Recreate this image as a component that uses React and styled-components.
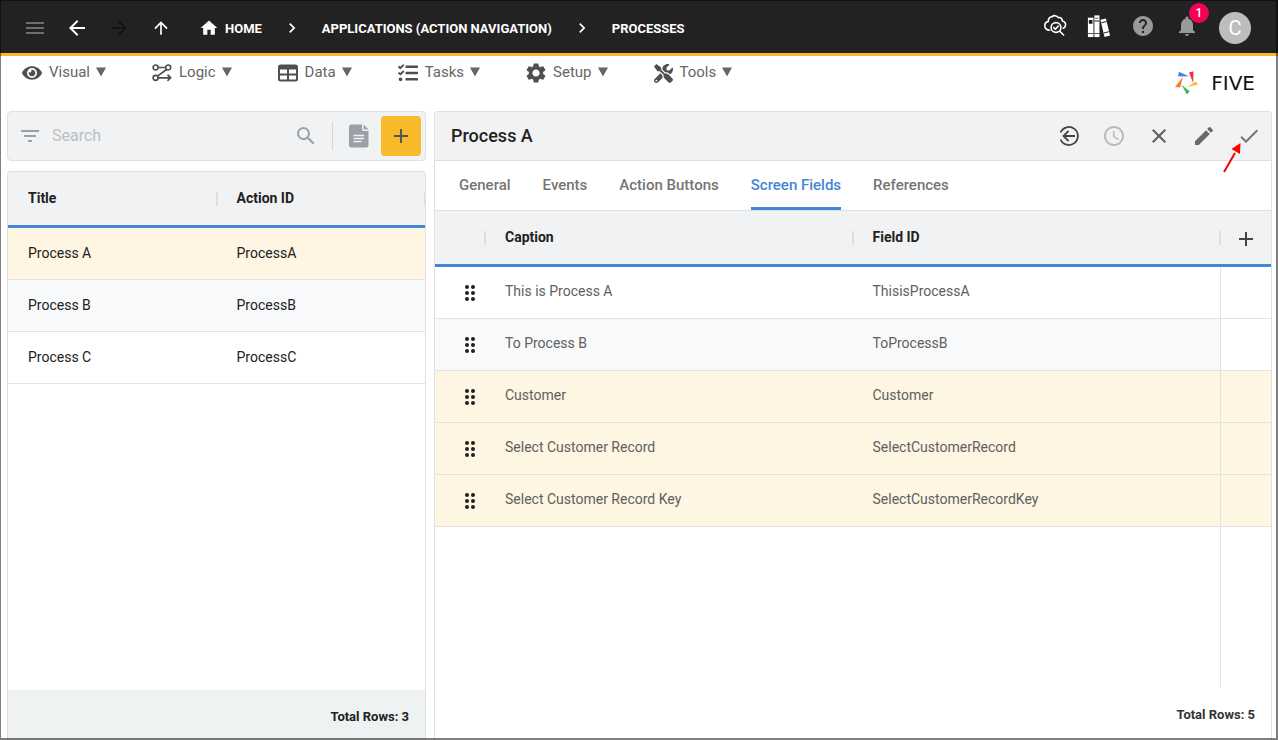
import React, { useState } from 'react';
import styled, { createGlobalStyle, css } from 'styled-components';
import {
  MdMenu, MdArrowBack, MdArrowForward, MdArrowUpward, MdHome, MdChevronRight, MdHelp, MdNotifications,
  MdSettings, MdFilterList, MdSearch, MdAdd, MdSchedule, MdClose, MdEdit, MdCheck,
} from 'react-icons/md';
import { FaEye, FaTasks, FaTools } from 'react-icons/fa';

const GlobalStyle = createGlobalStyle`
  * {
    box-sizing: border-box;
  }

  body {
    margin: 0;
    background: #fff;
    color: #212121;
    font-family: Roboto, "Liberation Sans", sans-serif;
    font-size: 14px;
  }

  button,
  input {
    font: inherit;
  }
`;

const Page = styled.div`
  position: relative;
  display: flex;
  flex-direction: column;
  min-height: 100vh;

  &::after {
    content: "";
    position: absolute;
    inset: 0;
    border: solid rgba(0, 0, 0, 0.5);
    border-width: 1px 2px 2px 1px;
    pointer-events: none;
  }
`;

const IconButton = styled.button`
  position: relative;
  display: flex;
  align-items: center;
  justify-content: center;
  width: 24px;
  height: 24px;
  padding: 0;
  border: 0;
  background: none;
  color: ${(props) => props.$color || '#5f5f5f'};
  cursor: pointer;
`;

/* Top bar */

const TopBar = styled.header`
  display: flex;
  align-items: center;
  height: 56px;
  padding: 3px 27px 0 23px;
  border-bottom: 3px solid #fbb829;
  background: #222;
`;

const NavButtons = styled.div`
  display: flex;
  gap: 18px;
  margin-right: 26px;
`;

const Breadcrumbs = styled.nav`
  display: flex;
  align-items: center;
  gap: 20px;
  color: #fff;
`;

const Crumb = styled.a`
  display: flex;
  align-items: center;
  gap: 6px;
  color: #fff;
  font-size: 13px;
  font-weight: 700;
  line-height: 21px;
  text-decoration: none;
`;

const TopActions = styled.div`
  display: flex;
  align-items: center;
  gap: 20px;
  margin-left: auto;
`;

const TopIcons = styled.div`
  display: flex;
  gap: 20px;
  padding-bottom: 4px;
`;

const Badge = styled.span`
  position: absolute;
  top: -11px;
  right: -10px;
  width: 20px;
  height: 20px;
  border-radius: 10px;
  background: #f50057;
  color: #fff;
  font-size: 12px;
  font-weight: 500;
  line-height: 20px;
  text-align: center;
`;

const Avatar = styled.button`
  width: 32px;
  height: 32px;
  padding: 0;
  border: 0;
  border-radius: 50%;
  background: #bdbdbd;
  color: #fff;
  font-size: 20px;
  line-height: 32px;
`;

/* Menu bar */

const MenuBar = styled.div`
  display: flex;
  justify-content: space-between;
  height: 55px;
  padding: 4px 23px 0 22px;
`;

const Menus = styled.nav`
  display: flex;
  align-items: flex-start;
  gap: 46px;
`;

const MenuButton = styled.button`
  display: flex;
  align-items: center;
  height: 24px;
  padding: 0;
  border: 0;
  background: none;
  color: #666;
  font-size: 15px;
  line-height: 24px;
  cursor: pointer;

  svg:first-child {
    margin: 2px 7px 0 0;
    color: #4f4f4f;
  }
`;

const Caret = styled.svg`
  margin-left: 6px;
`;

const Logo = styled.div`
  display: flex;
  align-items: center;
  align-self: flex-start;
  gap: 12px;
  margin-top: 11px;
  color: #111;
  font-family: "DejaVu Sans", sans-serif;
  font-size: 20px;
  line-height: 24px;
`;

/* Panels */

const Workspace = styled.main`
  flex: 1;
  display: grid;
  grid-template-columns: 1fr 2fr;
  gap: 8px;
  padding: 0 6px 0 7px;
`;

const ListColumn = styled.section`
  display: flex;
  flex-direction: column;
  gap: 10px;
  min-width: 0;
`;

const SearchBar = styled.div`
  display: flex;
  align-items: center;
  height: 50px;
  padding: 0 4px 0 10px;
  border: 1px solid #e0e0e0;
  border-radius: 4px;
  background: #f1f2f4;
`;

const SearchInput = styled.input`
  flex: 1;
  min-width: 0;
  padding: 0 10px;
  border: 0;
  outline: 0;
  background: none;
  color: #212121;
  font-size: 16px;
  line-height: 24px;

  &::placeholder {
    color: #bcbfc3;
    opacity: 1;
  }
`;

const Divider = styled.span`
  width: 1px;
  height: 28px;
  margin: 0 14px;
  background: #d5d7d9;
`;

const AddButton = styled(IconButton)`
  width: 40px;
  height: 40px;
  margin-left: 10px;
  border-radius: 4px;
  background: #f8b92b;
`;

const Card = styled.div`
  flex: 1;
  display: flex;
  flex-direction: column;
  min-width: 0;
  border: 1px solid #e0e0e0;
  border-bottom: 0;
  border-radius: 4px 4px 0 0;
  overflow: hidden;
`;

const Table = styled.table`
  width: 100%;
  table-layout: fixed;
  border-collapse: separate;
  border-spacing: 0;
`;

const HeadCell = styled.th`
  position: relative;
  height: 56px;
  padding: 0 20px 2px;
  border-bottom: 3px solid #4485d8;
  background: #f1f2f4;
  font-size: 14px;
  font-weight: 700;
  text-align: left;

  &::after {
    content: "";
    position: absolute;
    top: 20px;
    right: -1px;
    z-index: 1;
    width: 2px;
    height: 14px;
    background: ${(props) => (props.$last ? 'none' : '#dcdee0')};
  }
`;

const AddCell = styled(HeadCell)`
  padding: 2px 14px 0;
`;

const Row = styled.tr`
  --row: #fff;

  &:nth-child(even) {
    --row: #f8f9fb;
  }

  ${(props) => props.$marked && css`
    &&& {
      --row: #fef5e3;
      --side: #fef5e3;
    }
  `}
`;

const Cell = styled.td`
  height: 52px;
  padding: 0 20px 2px;
  border-bottom: 1px solid #e2e2e2;
  background: var(--row);
  font-size: 14px;
  overflow: hidden;
  text-overflow: ellipsis;
  white-space: nowrap;
`;

const FieldCell = styled(Cell)`
  padding-bottom: 4px;
  color: #606060;
`;

const HandleCell = styled(Cell)`
  padding: 0 0 0 30px;
  line-height: 0;
`;

const SideCell = styled(Cell)`
  border-left: 1px solid #e2e2e2;
  background: var(--side, #fff);
`;

const DragCol = styled.col`
  width: 50px;
`;

const SideCol = styled.col`
  width: 51px;
`;

const ListFooter = styled.footer`
  height: 50px;
  margin-top: auto;
  padding: 0 16px;
  background: #eef2f3;
  font-size: 13px;
  font-weight: 700;
  line-height: 53px;
  text-align: right;
`;

const FieldFooter = styled(ListFooter)`
  height: 53px;
  margin-top: 0;
  background: none;
  color: #333;
  line-height: 55px;
`;

const DetailHeader = styled.div`
  display: flex;
  align-items: center;
  height: 49px;
  padding: 0 10px 0 16px;
  border-bottom: 1px solid #e0e0e0;
  background: #f1f2f4;
`;

const Title = styled.h1`
  margin: 0;
  padding-bottom: 2px;
  font-size: 18px;
  font-weight: 500;
`;

const Actions = styled.div`
  position: relative;
  display: flex;
  gap: 21px;
  margin-left: auto;
`;

const Pointer = styled.svg`
  position: absolute;
  top: 18px;
  right: 19px;
  pointer-events: none;
`;

const Tabs = styled.div`
  display: flex;
  gap: 32px;
  height: 50px;
  padding: 0 24px;
  border-bottom: 1px solid #e0e0e0;
`;

const Tab = styled.button`
  height: 49px;
  padding: 1px 0 0;
  border: 0;
  border-bottom: 3px solid ${(props) => (props.$active ? '#4485d8' : 'transparent')};
  background: none;
  color: ${(props) => (props.$active ? '#4485d8' : '#757575')};
  font-size: 15px;
  font-weight: 500;
  cursor: pointer;
`;

const Filler = styled.div`
  flex: 1;
  display: flex;
  justify-content: flex-end;

  &::after {
    content: "";
    width: 50px;
    border-left: 1px solid #e2e2e2;
  }
`;

/* Icons */

const CloudSearchIcon = () => (
  <svg width="24" height="24" viewBox="0 0 24 24" fill="none" stroke="currentColor" strokeWidth="1.6" strokeLinecap="round" strokeLinejoin="round">
    <path d="M6.600 16.200C3.600 16.200 1.800 14.200 1.800 11.700C1.800 9.400 3.300 7.800 5.300 7.400C5.300 4.200 7 2.700 9.200 2.700C10.200 1.200 13.800 1.200 15.300 3.600C18 3.200 19.400 4.800 19.300 7C21.500 7.600 22.800 9.400 22.500 11.300C22.300 12.700 21.500 13.700 20.200 14.200" />
    <circle cx="13" cy="13.500" r="4.900" />
    <path d="M10.800 13.600l1.600 1.600 2.900-3.200M16.800 17.200l3.800 3.800" />
  </svg>
);

const BooksIcon = () => (
  <svg width="26" height="26" viewBox="0 0 26 26" fill="currentColor">
    <path d="M1 4h6v21H1z" />
    <path d="M8 1.500h5.500V25H8z" />
    <path d="M14.500 6.200l6-1.400L25 23.400l-6 1.500z" />
    <g fill="#222">
      <path d="M2 6.500h4v4H2zM1 20.500h6v1H1zM9 4h3.500v1H9zM8 20.500h5.500v1H8zM8 7h5.500v1H8z" />
      <path d="M15.500 9l5.500-1.400.3 1-5.500 1.400zM18.200 20l5.600-1.400.3 1-5.600 1.400z" />
    </g>
  </svg>
);

const LogicIcon = () => (
  <svg width="20" height="20" viewBox="0 0 20 20" fill="none" stroke="currentColor" strokeWidth="1.7">
    <circle cx="3.600" cy="4.500" r="2.500" />
    <circle cx="16.200" cy="4.500" r="2.500" />
    <circle cx="3.600" cy="14.800" r="2.500" />
    <path d="M6.100 4.500h7.600M14.500 6.500l-9 6.600M6.100 14.800h12M15.500 11.700l3.100 3.100-3.100 3.100" />
  </svg>
);

const DataIcon = () => (
  <svg width="20" height="20" viewBox="0 0 20 20" fill="currentColor">
    <path fillRule="evenodd" d="M2.500 1.500h15A2.500 2.500 0 0 1 20 4v12a2.500 2.500 0 0 1-2.500 2.500h-15A2.500 2.500 0 0 1 0 16V4A2.500 2.500 0 0 1 2.500 1.500zM2 6.500v4h7v-4zM11 6.500v4h7v-4zM2 12.500v4h7v-4zM11 12.500v4h7v-4z" />
  </svg>
);

const NoteIcon = () => (
  <svg width="20" height="24" viewBox="0 0 20 24" fill="#9aa0a6">
    <path d="M2.500.5H13V5a2 2 0 0 0 2 2h4.500v14a2.500 2.500 0 0 1-2.500 2.500H2.500A2.500 2.500 0 0 1 0 21V3A2.500 2.500 0 0 1 2.500.5z" />
    <path d="M14.500.5l5 5h-4a1 1 0 0 1-1-1z" />
    <path d="M4.500 11.500h10.500M4.500 14.500h10.500M4.500 17.500h8" stroke="#f1f2f4" strokeWidth="1.4" />
  </svg>
);

const ExitIcon = () => (
  <svg width="24" height="24" viewBox="0 0 24 24" fill="none" stroke="currentColor" strokeWidth="1.8">
    <path d="M3.600 8.500A9 9 0 1 1 3.600 15.500" />
    <path d="M18 12H7M11.500 7L6.500 12l5 5" />
  </svg>
);

const DragIcon = () => (
  <svg width="10" height="16" viewBox="0 0 10 16" fill="#212121">
    {[2, 8, 14].map((y) => (
      <g key={y}>
        <circle cx="2" cy={y} r="2" />
        <circle cx="8" cy={y} r="2" />
      </g>
    ))}
  </svg>
);

const FiveMark = () => (
  <svg width="24" height="24" viewBox="0 0 24 24">
    <path fill="#4485d8" d="M3.800.8L14 5.200 3.200 5.500z" />
    <path fill="#e8363d" d="M18.500.2l-.3 11.800-4.200-10.500z" />
    <path fill="#f8b92b" d="M23.300 13.200L12.500 16l8-5.200z" />
    <path fill="#3fae5a" d="M6.500 13.800l8 6.500-2.500 3.200z" />
    <path fill="#f5812a" d="M7.800 5.800L5.200 16.500 0 16z" />
  </svg>
);

const DownCaret = () => (
  <Caret width="10" height="10" viewBox="0 0 10 10" fill="currentColor">
    <path d="M0 .5h10L5 9.500z" />
  </Caret>
);

const menus = [
  { label: 'Visual', icon: <FaEye size={20} /> },
  { label: 'Logic', icon: <LogicIcon /> },
  { label: 'Data', icon: <DataIcon /> },
  { label: 'Tasks', icon: <FaTasks size={20} /> },
  { label: 'Setup', icon: <MdSettings size={20} viewBox="2 2 20 20" /> },
  { label: 'Tools', icon: <FaTools size={19} /> },
];

const processes = [
  { title: 'Process A', actionId: 'ProcessA' },
  { title: 'Process B', actionId: 'ProcessB' },
  { title: 'Process C', actionId: 'ProcessC' },
];

const tabs = ['General', 'Events', 'Action Buttons', 'Screen Fields', 'References'];

const fields = [
  { caption: 'This is Process A', fieldId: 'ThisisProcessA' },
  { caption: 'To Process B', fieldId: 'ToProcessB' },
  { caption: 'Customer', fieldId: 'Customer', isNew: true },
  { caption: 'Select Customer Record', fieldId: 'SelectCustomerRecord', isNew: true },
  { caption: 'Select Customer Record Key', fieldId: 'SelectCustomerRecordKey', isNew: true },
];

const Header = () => (
  <TopBar>
    <NavButtons>
      <IconButton $color="#6f6f6f" aria-label="Menu"><MdMenu size={24} /></IconButton>
      <IconButton $color="#fff" aria-label="Back"><MdArrowBack size={24} /></IconButton>
      <IconButton $color="#141414" aria-label="Forward" disabled><MdArrowForward size={24} /></IconButton>
      <IconButton $color="#fff" aria-label="Up"><MdArrowUpward size={20} /></IconButton>
    </NavButtons>
    <Breadcrumbs aria-label="Breadcrumb">
      <Crumb href="#home"><MdHome size={20} />HOME</Crumb>
      <MdChevronRight size={20} />
      <Crumb href="#applications">APPLICATIONS (ACTION NAVIGATION)</Crumb>
      <MdChevronRight size={20} />
      <Crumb href="#processes">PROCESSES</Crumb>
    </Breadcrumbs>
    <TopActions>
      <TopIcons>
        <IconButton $color="#fff" aria-label="Inspect cloud"><CloudSearchIcon /></IconButton>
        <IconButton $color="#fff" aria-label="Library"><BooksIcon /></IconButton>
        <IconButton $color="#999" aria-label="Help"><MdHelp size={24} /></IconButton>
        <IconButton $color="#999" aria-label="Notifications">
          <MdNotifications size={24} />
          <Badge>1</Badge>
        </IconButton>
      </TopIcons>
      <Avatar aria-label="Account">C</Avatar>
    </TopActions>
  </TopBar>
);

const ProcessList = () => (
  <ListColumn>
    <SearchBar>
      <IconButton $color="#9aa0a6" aria-label="Filter"><MdFilterList size={24} /></IconButton>
      <SearchInput type="text" placeholder="Search" aria-label="Search" />
      <IconButton $color="#9aa0a6" aria-label="Run search"><MdSearch size={24} /></IconButton>
      <Divider />
      <IconButton aria-label="Notes"><NoteIcon /></IconButton>
      <AddButton $color="#555" aria-label="Add process"><MdAdd size={24} /></AddButton>
    </SearchBar>
    <Card>
      <Table>
        <thead>
          <tr>
            <HeadCell>Title</HeadCell>
            <HeadCell>Action ID</HeadCell>
          </tr>
        </thead>
        <tbody>
          {processes.map((process, index) => (
            <Row key={process.actionId} $marked={index === 0}>
              <Cell>{process.title}</Cell>
              <Cell>{process.actionId}</Cell>
            </Row>
          ))}
        </tbody>
      </Table>
      <ListFooter>Total Rows: {processes.length}</ListFooter>
    </Card>
  </ListColumn>
);

const ProcessDetail = () => {
  const [activeTab, setActiveTab] = useState('Screen Fields');

  return (
    <Card>
      <DetailHeader>
        <Title>Process A</Title>
        <Actions>
          <IconButton $color="#444" aria-label="Exit"><ExitIcon /></IconButton>
          <IconButton $color="#bbb" aria-label="History" disabled><MdSchedule size={24} /></IconButton>
          <IconButton aria-label="Cancel"><MdClose size={24} /></IconButton>
          <IconButton $color="#6a6a6a" aria-label="Edit"><MdEdit size={24} /></IconButton>
          <IconButton $color="#757575" aria-label="Save"><MdCheck size={24} /></IconButton>
          <Pointer width="20" height="32" viewBox="0 0 20 32">
            <path d="M2 30L13 11" stroke="#f00" strokeWidth="2" />
            <path d="M18.500 1l-.5 11-8.500-5z" fill="#f00" />
          </Pointer>
        </Actions>
      </DetailHeader>
      <Tabs role="tablist">
        {tabs.map((tab) => (
          <Tab key={tab} role="tab" aria-selected={tab === activeTab} $active={tab === activeTab} onClick={() => setActiveTab(tab)}>
            {tab}
          </Tab>
        ))}
      </Tabs>
      <Table>
        <colgroup>
          <DragCol />
          <col />
          <col />
          <SideCol />
        </colgroup>
        <thead>
          <tr>
            <HeadCell aria-label="Order" />
            <HeadCell>Caption</HeadCell>
            <HeadCell>Field ID</HeadCell>
            <AddCell $last>
              <IconButton $color="#444" aria-label="Add field"><MdAdd size={24} /></IconButton>
            </AddCell>
          </tr>
        </thead>
        <tbody>
          {fields.map((field) => (
            <Row key={field.fieldId} $marked={field.isNew}>
              <HandleCell><DragIcon /></HandleCell>
              <FieldCell>{field.caption}</FieldCell>
              <FieldCell>{field.fieldId}</FieldCell>
              <SideCell />
            </Row>
          ))}
        </tbody>
      </Table>
      <Filler />
      <FieldFooter>Total Rows: {fields.length}</FieldFooter>
    </Card>
  );
};

const App = () => (
  <>
    <GlobalStyle />
    <Page>
      <Header />
      <MenuBar>
        <Menus>
          {menus.map(({ label, icon }) => (
            <MenuButton key={label}>
              {icon}
              {label}
              <DownCaret />
            </MenuButton>
          ))}
        </Menus>
        <Logo><FiveMark />FIVE</Logo>
      </MenuBar>
      <Workspace>
        <ProcessList />
        <ProcessDetail />
      </Workspace>
    </Page>
  </>
);

export default App;
